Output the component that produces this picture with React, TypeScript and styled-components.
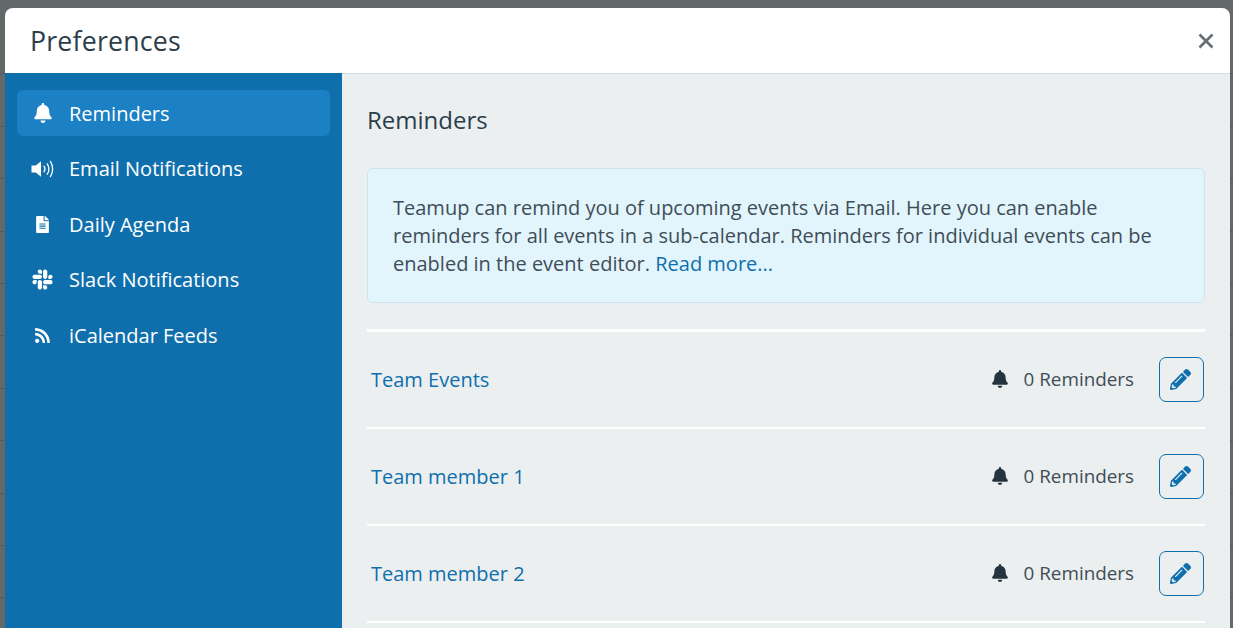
import React from 'react'
import styled, { createGlobalStyle } from 'styled-components'
import { FaBell, FaFileAlt, FaPencilAlt, FaRss, FaSlack } from 'react-icons/fa'

const GlobalStyle = createGlobalStyle`
  html, body {
    margin: 0;
    height: 628px;
    overflow: hidden;
    background-color: #63686a;
    background-image: repeating-linear-gradient(to bottom, transparent 0, transparent 51.4px, #54595b 51.4px, #54595b 52.4px);
    background-position: 0 22px;
    font-family: "Open Sans", "Liberation Sans", sans-serif;
  }
`

const VolumeIcon = () => (
  <svg width="24" height="20" viewBox="0 0 24 20" fill="none">
    <path d="M0.5 6.5h4.2L10 2.2v15.6l-5.3-4.3H0.5z" fill="#fff" />
    <path d="M13 7.2c1.1 1.6 1.1 4 0 5.6" stroke="#fff" strokeWidth="1.3" strokeLinecap="round" />
    <path d="M16.2 4.8c2 3 2 7.4 0 10.4" stroke="#fff" strokeWidth="1.3" strokeLinecap="round" />
    <path d="M19.4 2.4c3 4.4 3 10.8 0 15.2" stroke="#fff" strokeWidth="1.3" strokeLinecap="round" />
  </svg>
)

const menu = [
  { label: 'Reminders', icon: <FaBell size={20} />, active: true },
  { label: 'Email Notifications', icon: <VolumeIcon /> },
  { label: 'Daily Agenda', icon: <FaFileAlt size={17} /> },
  { label: 'Slack Notifications', icon: <FaSlack size={23} /> },
  { label: 'iCalendar Feeds', icon: <FaRss size={17} /> },
]

const calendars = ['Team Events', 'Team member 1', 'Team member 2']

export default function App() {
  return (
    <>
      <GlobalStyle />
      <Modal>
        <Header>
          <Title>Preferences</Title>
          <CloseButton aria-label="Close">
            <svg width="16" height="16" viewBox="0 0 16 16">
              <path d="M1.5 1.5l13 13M14.5 1.5l-13 13" stroke="#666f76" strokeWidth="2.7" />
            </svg>
          </CloseButton>
        </Header>
        <Body>
          <Sidebar>
            {menu.map((item) => (
              <NavItem key={item.label} $active={item.active}>
                <NavIcon>{item.icon}</NavIcon>
                {item.label}
              </NavItem>
            ))}
          </Sidebar>
          <Content>
            <SectionTitle>Reminders</SectionTitle>
            <Alert>
              Teamup can remind you of upcoming events via Email. Here you can enable
              reminders for all events in a sub-calendar. Reminders for individual events can be
              enabled in the event editor. <Link>Read more...</Link>
            </Alert>
            <List>
              {calendars.map((name) => (
                <Row key={name}>
                  <Link>{name}</Link>
                  <Status>
                    <FaBell size={18} />
                    <span>0 Reminders</span>
                  </Status>
                  <EditButton aria-label="Edit">
                    <FaPencilAlt size={21} />
                  </EditButton>
                </Row>
              ))}
            </List>
          </Content>
        </Body>
      </Modal>
    </>
  )
}

const Modal = styled.div`
  margin: 8px 3px 0 5px;
  height: 640px;
  display: flex;
  flex-direction: column;
  background: #fff;
  border-radius: 8px 8px 0 0;
  overflow: hidden;
`

const Header = styled.div`
  height: 65px;
  flex: none;
  display: flex;
  align-items: center;
  justify-content: space-between;
  padding: 0 16px 0 25px;
  box-sizing: border-box;
`

const Title = styled.div`
  font-size: 26.7px;
  line-height: 64px;
  color: #2c3e4a;
  letter-spacing: 0.2px;
`

const CloseButton = styled.button`
  border: 0;
  padding: 0;
  background: none;
  display: flex;
`

const Body = styled.div`
  flex: 1;
  display: flex;
`

const Sidebar = styled.nav`
  width: 337px;
  flex: none;
  box-sizing: border-box;
  padding: 17px 12px 0;
  background: #0f6fad;
  display: flex;
  flex-direction: column;
  gap: 9.5px;
`

const NavItem = styled.div<{ $active?: boolean }>`
  height: 46px;
  display: flex;
  align-items: center;
  padding-left: 13px;
  border-radius: 6px;
  font-size: 20px;
  color: #fff;
  background: ${(p) => (p.$active ? '#1b80c4' : 'transparent')};
`

const NavIcon = styled.span`
  width: 25px;
  margin-right: 14px;
  display: flex;
  justify-content: center;
`

const Content = styled.main`
  flex: 1;
  box-sizing: border-box;
  padding: 0 25px;
  background: #ebeff0;
  border-top: 1px solid #cfe0e6;
`

const SectionTitle = styled.h2`
  margin: 0;
  padding-top: 29px;
  height: 94px;
  box-sizing: border-box;
  font-size: 24px;
  line-height: 34px;
  font-weight: 500;
  color: #2c3e4a;
`

const Alert = styled.div`
  height: 135px;
  box-sizing: border-box;
  padding: 25px;
  background: #e2f5fc;
  border: 1px solid #cde4ee;
  border-radius: 6px;
  font-size: 20px;
  line-height: 28px;
  color: #3f4d57;
`

const Link = styled.a`
  color: #0f6fad;
  font-size: 20px;
`

const List = styled.div`
  margin-top: 26px;
  border-top: 3px solid #fff;
`

const Row = styled.div`
  height: 95px;
  display: flex;
  align-items: center;
  padding: 0 1px 0 4px;
  border-bottom: 2px solid #fff;
`

const Status = styled.div`
  margin-left: auto;
  margin-top: -2px;
  display: flex;
  align-items: center;
  gap: 15px;
  font-size: 18.85px;
  color: #3f4d57;

  svg {
    color: #24343f;
  }
`

const EditButton = styled.button`
  width: 45px;
  height: 45px;
  margin-left: 25px;
  padding: 0 3px 0 0;
  display: flex;
  align-items: center;
  justify-content: center;
  background: transparent;
  border: 1px solid #0f6fad;
  border-radius: 7px;
  color: #0f6fad;
`
